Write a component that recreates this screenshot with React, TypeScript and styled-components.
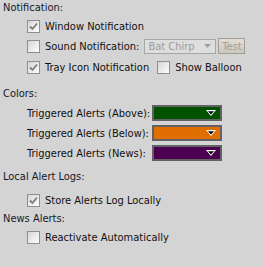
import React from 'react';
import styled, { createGlobalStyle } from 'styled-components';

const GlobalStyle = createGlobalStyle`
  html, body {
    margin: 0;
    padding: 0;
    background: #d4d4d4;
  }
  body {
    font-family: 'DejaVu Sans Condensed', 'DejaVu Sans', sans-serif;
    font-size: 11px;
    color: #111;
  }
`;

const Panel = styled.div`
  width: 264px;
  height: 267px;
  padding: 0 0 0 3px;
  box-sizing: border-box;
  display: flex;
  flex-direction: column;
`;

const SectionTitle = styled.div<{ $top: number }>`
  height: 16px;
  line-height: 16px;
  margin-top: ${(p) => p.$top}px;
  color: #15182a;
`;

const Group = styled.div`
  display: flex;
  flex-direction: column;
  padding-left: 24px;
`;

const Row = styled.div<{ $h: number; $top?: number }>`
  display: flex;
  align-items: center;
  height: ${(p) => p.$h}px;
  margin-top: ${(p) => p.$top || 0}px;
  white-space: nowrap;
`;

const CheckLabel = styled.label`
  display: flex;
  align-items: center;
  gap: 5px;
`;

const Box = styled.span`
  width: 13px;
  height: 13px;
  box-sizing: border-box;
  border: 1px solid #8f8f8f;
  background: linear-gradient(135deg, #d6d6d6 0%, #f2f2f2 70%, #ffffff 100%);
  display: flex;
  align-items: center;
  justify-content: center;
`;

const Select = styled.div`
  margin-left: 5px;
  width: 72px;
  height: 15px;
  box-sizing: border-box;
  border: 1px solid #a6a6a6;
  background: #dedede;
  color: #9c9c9c;
  display: flex;
  align-items: center;
  justify-content: space-between;
  padding: 0 4px 0 3px;
`;

const TestButton = styled.div`
  margin-left: 2px;
  width: 27px;
  height: 16px;
  box-sizing: border-box;
  border: 1px solid #a29e96;
  background: linear-gradient(#e2ded6, #cdc8be);
  color: #a19d95;
  display: flex;
  align-items: center;
  justify-content: center;
`;

const Spacer = styled.span<{ $w: number }>`
  display: inline-block;
  width: ${(p) => p.$w}px;
`;

const ColorGrid = styled.div`
  display: grid;
  grid-template-columns: 125px 70px;
  row-gap: 4px;
  padding-left: 24px;
  margin-top: 3px;
  align-items: center;
`;

const Swatch = styled.div<{ $color: string }>`
  height: 16px;
  box-sizing: border-box;
  border: 2px solid #626262;
  background: ${(p) => p.$color};
  display: flex;
  align-items: center;
  justify-content: flex-end;
  padding-right: 4px;
`;

const Check: React.FC<{ checked?: boolean }> = ({ checked }) => (
  <Box>
    {checked && (
      <svg width="9" height="9" viewBox="0 0 9 9">
        <path d="M1 4.5 L3.5 7 L8 1.5" fill="none" stroke="#7d7d7d" strokeWidth="1.8" />
      </svg>
    )}
  </Box>
);

const Checkbox: React.FC<{ checked?: boolean; label: string }> = ({ checked, label }) => (
  <CheckLabel>
    <Check checked={checked} />
    <span>{label}</span>
  </CheckLabel>
);

const DropArrow = () => (
  <svg width="10" height="6" viewBox="0 0 10 6">
    <polygon points="0,0 10,0 5,6" fill="#ffffff" />
    <polygon points="2,1.2 8,1.2 5,4.6" fill="#000000" />
  </svg>
);

const colors = [
  { label: 'Triggered Alerts (Above):', color: '#005200' },
  { label: 'Triggered Alerts (Below):', color: '#e06e00' },
  { label: 'Triggered Alerts (News):', color: '#4e0050' },
];

export default function App() {
  return (
    <>
      <GlobalStyle />
      <Panel>
        <SectionTitle $top={0}>Notification:</SectionTitle>
        <Group>
          <Row $h={20} $top={0}>
            <Checkbox checked label="Window Notification" />
          </Row>
          <Row $h={20}>
            <Checkbox label="Sound Notification:" />
            <Select>
              <span>Bat Chirp</span>
              <svg width="7" height="4" viewBox="0 0 7 4">
                <polygon points="0,0 7,0 3.5,4" fill="#a0a0a0" />
              </svg>
            </Select>
            <TestButton>Test</TestButton>
          </Row>
          <Row $h={20} $top={1}>
            <Checkbox checked label="Tray Icon Notification" />
            <Spacer $w={8} />
            <Checkbox label="Show Balloon" />
          </Row>
        </Group>

        <SectionTitle $top={9}>Colors:</SectionTitle>
        <ColorGrid>
          {colors.map((c) => (
            <React.Fragment key={c.label}>
              <span>{c.label}</span>
              <Swatch $color={c.color}>
                <DropArrow />
              </Swatch>
            </React.Fragment>
          ))}
        </ColorGrid>

        <SectionTitle $top={8}>Local Alert Logs:</SectionTitle>
        <Group>
          <Row $h={20} $top={5}>
            <Checkbox checked label="Store Alerts Log Locally" />
          </Row>
        </Group>
        <SectionTitle $top={1}>News Alerts:</SectionTitle>
        <Group>
          <Row $h={20} $top={0}>
            <Checkbox label="Reactivate Automatically" />
          </Row>
        </Group>
      </Panel>
    </>
  );
}
